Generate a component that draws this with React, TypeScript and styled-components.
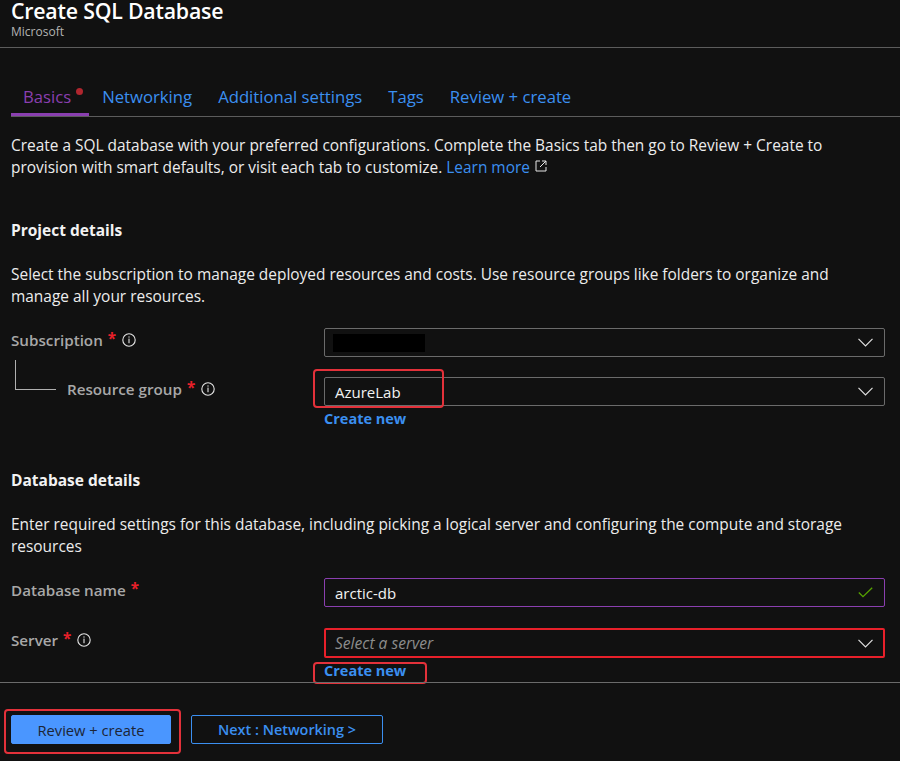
import React from "react";
import styled, { createGlobalStyle } from "styled-components";

const Global = createGlobalStyle`
  html, body { margin: 0; padding: 0; background: #111111; }
  body { font-family: "Open Sans", "Noto Sans", "Liberation Sans", sans-serif; color: #e8e8e8; }
`;

const Page = styled.div`
  width: 900px;
  height: 761px;
  overflow: hidden;
  position: relative;
  background: #111111;
`;

const Header = styled.header`
  display: flex;
  flex-direction: column;
  height: 48px;
  border-bottom: 1px solid #5c5c5c;
  padding: 0 11px;
  box-sizing: border-box;
`;

const Title = styled.h1`
  margin: -2px 0 0;
  font-size: 21.3px;
  line-height: 26px;
  font-weight: 600;
  color: #ffffff;
  letter-spacing: -0.2px;
`;

const Publisher = styled.div`
  font-size: 12px;
  line-height: 14px;
  color: #b3b3b3;
  margin-top: 1px;
`;

const TabBar = styled.nav`
  display: flex;
  margin: 32px 0 0 11px;
  border-bottom: 1px solid #5c5c5c;
  gap: 26px;
`;

const Tab = styled.div<{ $active?: boolean }>`
  height: 36px;
  display: flex;
  align-items: center;
  padding: 0 0 3px;
  box-sizing: border-box;
  font-size: 16.7px;
  color: ${(p) => (p.$active ? "#8a3fb0" : "#3b8ff0")};
  box-shadow: ${(p) => (p.$active ? "inset 0 -3px 0 #8a3fb0" : "none")};
  padding-left: ${(p) => (p.$active ? "12px" : "0")};
  padding-right: ${(p) => (p.$active ? "6px" : "0")};
  margin-right: ${(p) => (p.$active ? "-13px" : "0")};
`;

const Dot = styled.span`
  width: 7px;
  height: 7px;
  border-radius: 50%;
  background: #b0262e;
  margin: -10px 0 0 5px;
`;

const Content = styled.main`
  padding: 0 15px 0 11px;
`;

const Para = styled.p<{ $top: number }>`
  margin: ${(p) => p.$top}px 0 0;
  font-size: 15.45px;
  line-height: 22px;
  color: #ececec;
  white-space: nowrap;
`;

const Link = styled.a`
  color: #3b8ff0;
  text-decoration: none;
`;

const SectionTitle = styled.h2<{ $top: number }>`
  margin: ${(p) => p.$top}px 0 0;
  font-size: 15.5px;
  line-height: 22px;
  font-weight: 700;
  color: #f2f2f2;
`;

const Row = styled.div<{ $top: number }>`
  display: grid;
  grid-template-columns: 313px 1fr;
  margin-top: ${(p) => p.$top}px;
  position: relative;
`;

const Label = styled.div<{ $indent?: boolean }>`
  display: flex;
  align-items: center;
  height: 24px;
  font-size: 15.2px;
  font-weight: 600;
  color: #a8a8a8;
  padding-left: ${(p) => (p.$indent ? "56px" : "0")};
  position: relative;
`;

const Star = styled.span`
  color: #e8202a;
  margin-left: 5px;
  font-weight: 700;
  position: relative;
  top: -2px;
`;

const Tree = styled.span`
  position: absolute;
  left: 4px;
  top: -17px;
  width: 40px;
  height: 29px;
  border-left: 1px solid #b0b0b0;
  border-bottom: 1px solid #b0b0b0;
`;

const Field = styled.div`
  display: flex;
  flex-direction: column;
  position: relative;
`;

const Box = styled.div<{ $variant?: "normal" | "valid" | "error" }>`
  height: ${(p) => (p.$variant === "error" ? "30px" : "29px")};
  box-sizing: border-box;
  border: ${(p) =>
    p.$variant === "valid"
      ? "1px solid #8a3fb0"
      : p.$variant === "error"
      ? "2px solid #e8202a"
      : "1px solid #6b6b6b"};
  border-radius: 2px;
  display: flex;
  align-items: center;
  padding: 0 ${(p) => (p.$variant === "error" ? "10px" : "11px")} 0 ${(p) => (p.$variant === "error" ? "9px" : "10px")};
  font-size: 15px;
  color: #f2f2f2;
`;

const Value = styled.span`
  flex: 1;
`;

const Placeholder = styled.span`
  flex: 1;
  font-style: italic;
  color: #8c8c8c;
  font-size: 15.6px;
`;

const Redacted = styled.span`
  width: 92px;
  height: 18px;
  background: #000;
  margin-left: -2px;
`;

const Spacer = styled.span`
  flex: 1;
`;

const CreateLink = styled.a`
  font-size: 14.5px;
  font-weight: 700;
  color: #3b8ff0;
  line-height: 20px;
  margin-top: 3px;
  text-decoration: none;
`;

const Annot = styled.span`
  position: absolute;
  border: 2px solid #e3313a;
  border-radius: 4px;
  pointer-events: none;
`;

const Footer = styled.footer`
  margin-top: 1px;
  border-top: 1px solid #6b6b6b;
  padding: 32px 11px 0;
  display: flex;
  gap: 20px;
  position: relative;
`;

const Button = styled.button<{ $primary?: boolean }>`
  height: 29px;
  box-sizing: border-box;
  border-radius: 2px;
  font-family: inherit;
  font-size: ${(p) => (p.$primary ? "14.7px" : "14.4px")};
  padding: 0;
  width: ${(p) => (p.$primary ? "160px" : "192px")};
  background: ${(p) => (p.$primary ? "#4a96ff" : "transparent")};
  color: ${(p) => (p.$primary ? "#1c2535" : "#3b8ff0")};
  border: 1px solid ${(p) => (p.$primary ? "#4a96ff" : "#3b8ff0")};
  font-weight: ${(p) => (p.$primary ? 400 : 600)};
`;

const InfoIcon = () => (
  <svg width="14" height="14" viewBox="0 0 14 14" style={{ marginLeft: 6 }}>
    <circle cx="7" cy="7" r="6.2" fill="none" stroke="#e6e6e6" strokeWidth="1.1" />
    <rect x="6.45" y="5.6" width="1.1" height="4.6" fill="#e6e6e6" />
    <rect x="6.45" y="3.4" width="1.1" height="1.2" fill="#e6e6e6" />
  </svg>
);

const Chevron = () => (
  <svg width="15" height="9" viewBox="0 0 15 9">
    <path d="M0.5 0.8 L7.5 7.8 L14.5 0.8" fill="none" stroke="#e0e0e0" strokeWidth="1.2" />
  </svg>
);

const Check = () => (
  <svg width="15" height="11" viewBox="0 0 15 11">
    <path d="M0.8 5.5 L5 9.6 L14.2 0.8" fill="none" stroke="#57a300" strokeWidth="1.3" />
  </svg>
);

const External = () => (
  <svg width="12" height="12" viewBox="0 0 12 12" style={{ marginLeft: 5, verticalAlign: 1 }}>
    <path d="M5 1 H1 V11 H11 V7" fill="none" stroke="#e6e6e6" strokeWidth="1" />
    <path d="M7 1 H11 V5 M11 1 L5 7" fill="none" stroke="#e6e6e6" strokeWidth="1" />
  </svg>
);

export default function App() {
  return (
    <Page>
      <Global />
      <Header>
        <Title>Create SQL Database</Title>
        <Publisher>Microsoft</Publisher>
      </Header>
      <TabBar>
        <Tab $active>
          Basics
          <Dot />
        </Tab>
        <Tab>Networking</Tab>
        <Tab>Additional settings</Tab>
        <Tab>Tags</Tab>
        <Tab>Review + create</Tab>
      </TabBar>
      <Content>
        <Para $top={17}>
          Create a SQL database with your preferred configurations. Complete the Basics tab then go to Review + Create to
          <br />
          provision with smart defaults, or visit each tab to customize. <Link>Learn more</Link>
          <External />
        </Para>
        <SectionTitle $top={41}>Project details</SectionTitle>
        <Para $top={22}>
          Select the subscription to manage deployed resources and costs. Use resource groups like folders to organize and
          <br />
          manage all your resources.
        </Para>
        <Row $top={21}>
          <Label>
            Subscription<Star>*</Star>
            <InfoIcon />
          </Label>
          <Field>
            <Box>
              <Redacted />
              <Spacer />
              <Chevron />
            </Box>
          </Field>
        </Row>
        <Row $top={20}>
          <Label $indent>
            <Tree />
            Resource group<Star>*</Star>
            <InfoIcon />
          </Label>
          <Field>
            <Box>
              <Value>AzureLab</Value>
              <Chevron />
            </Box>
            <CreateLink>Create new</CreateLink>
            <Annot style={{ left: -11, top: -8, width: 131, height: 39, boxSizing: "border-box" }} />
          </Field>
        </Row>
        <SectionTitle $top={40}>Database details</SectionTitle>
        <Para $top={22}>
          Enter required settings for this database, including picking a logical server and configuring the compute and storage
          <br />
          resources
        </Para>
        <Row $top={21}>
          <Label>
            Database name<Star>*</Star>
          </Label>
          <Field>
            <Box $variant="valid">
              <Value>arctic-db</Value>
              <Check />
            </Box>
          </Field>
        </Row>
        <Row $top={21}>
          <Label>
            Server<Star>*</Star>
            <InfoIcon />
          </Label>
          <Field>
            <Box $variant="error">
              <Placeholder>Select a server</Placeholder>
              <Chevron />
            </Box>
            <CreateLink>Create new</CreateLink>
            <Annot style={{ left: -11, top: 34, width: 114, height: 22, boxSizing: "border-box" }} />
          </Field>
        </Row>
      </Content>
      <Footer>
        <Button $primary>Review + create</Button>
        <Button>Next : Networking &gt;</Button>
        <Annot style={{ left: 4, top: 26, width: 177, height: 45, boxSizing: "border-box" }} />
      </Footer>
    </Page>
  );
}
